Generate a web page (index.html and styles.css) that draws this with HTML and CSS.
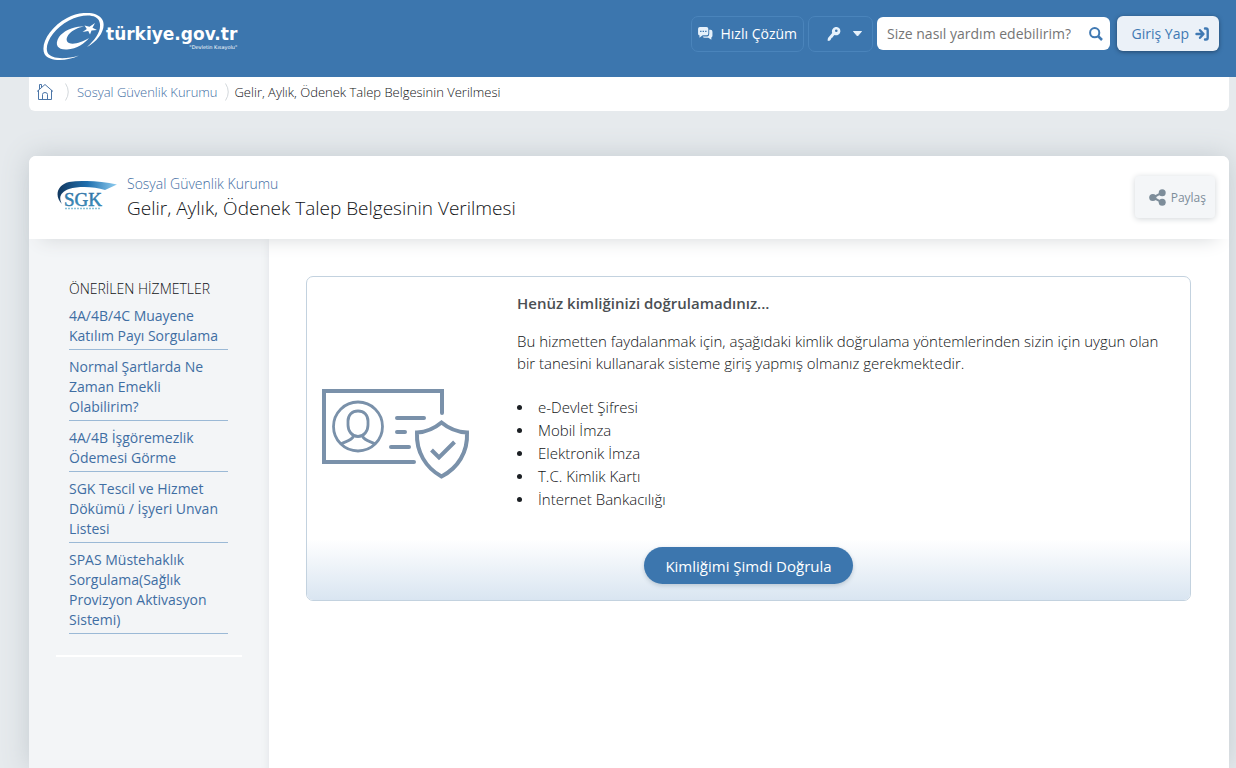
FILE: index.html
```html
<!DOCTYPE html>
<html lang="tr">
<head>
<meta charset="utf-8">
<meta name="viewport" content="width=device-width, initial-scale=1">
<title>Gelir, Aylık, Ödenek Talep Belgesinin Verilmesi</title>
<link rel="stylesheet" href="styles.css">
</head>
<body>
<header class="topbar">
  <a class="brand" href="#">
    <svg class="brand-mark" viewBox="0 0 62 48" width="62" height="48" aria-hidden="true">
      <path fill="#fff" fill-rule="evenodd" d="M36 42.500C24 48.500 6 49 1.500 41C-3 31 7 14 24 5C38 -2.500 56 -2 60 8C63 17 55 28 44 34C53 26 59 17 56.500 9C54 .5 39 1 26 7.500C11 15 1 31 4.500 39.500C8 46.500 23 46.500 36 42.500Z"/>
      <path fill="#fff" d="M41 13.500C31 12.500 20 18 16 24C11 32 15 37 24 36.500C34 36 42 30 46 25C39 29 31 32 26 30C19 26 29 15 41 13.500Z"/>
      <path fill="#fff" d="M52 10L49.500 14.800L54 17L48.500 17.500L47 21.500L45.200 18L39.500 19L43.800 16L41.500 12.500L46.500 13.800Z"/>
    </svg>
    <span class="brand-text"><span class="brand-name">türkiye.gov.tr</span><span class="brand-tag">"Devletin Kısayolu"</span></span>
  </a>
  <div class="tools">
    <button class="tool" type="button">
      <svg viewBox="0 0 16 14" width="15" height="13" aria-hidden="true"><path fill="#e6f1fb" fill-rule="evenodd" d="M2 0H9Q11 0 11 2V7Q11 9 9 9H5L1.500 11.500V9Q0 9 0 7V2Q0 0 2 0ZM2.200 4V5.500H3.700V4ZM4.900 4V5.500H6.400V4ZM7.600 4V5.500H9.100V4Z"/><path fill="#e6f1fb" d="M12 3H13.500Q15.500 3 15.500 5V9.500Q15.500 11 14.300 11.200V13.700L11 11.500H7Q5.500 11.500 5 10.200H10Q12 10 12 7.500Z"/></svg>
      Hızlı Çözüm
    </button>
    <button class="tool tool-key" type="button" aria-label="Erişim seçenekleri">
      <svg viewBox="0 0 14 14" width="14" height="14" aria-hidden="true"><path fill="#e6f1fb" fill-rule="evenodd" d="M8.500 0A4.200 4.200 0 1 1 7.500 8L6.500 9L5.500 10.500L4.500 11L3.500 13L2 14L.5 13.500L1 11L5.200 6A4.500 4.500 0 0 1 8.500 0ZM9.300 2.500A1.300 1.300 0 1 0 9.300 5.100A1.300 1.300 0 0 0 9.300 2.500Z"/></svg>
      <svg viewBox="0 0 9 6" width="9" height="6" aria-hidden="true"><path fill="#e6f1fb" d="M.5 .5H8.500L4.500 5Z" stroke="#e6f1fb" stroke-linejoin="round"/></svg>
    </button>
    <form class="search">
      <input class="search-input" type="search" aria-label="Arama" placeholder="Size nasıl yardım edebilirim?">
      <button class="search-button" type="button" aria-label="Ara"><svg viewBox="0 0 14 14" width="14" height="14" fill="none" stroke="#4079b3" stroke-width="2" aria-hidden="true"><circle cx="5.700" cy="5.700" r="4.600"/><path d="M9 9L13 13" stroke-width="2.500"/></svg></button>
    </form>
    <button class="login" type="button">Giriş Yap
      <svg viewBox="0 0 14 14" width="14" height="14" fill="none" stroke="#4079b3" stroke-width="2.400" stroke-linecap="round" stroke-linejoin="round" aria-hidden="true"><path d="M1.500 7H8M5 3.200L8.500 7L5 10.800M10 1.500H11Q12.700 1.500 12.700 3.500V10.500Q12.700 12.500 11 12.500H10"/></svg>
    </button>
  </div>
</header>
<div class="page">
  <nav class="crumbs" aria-label="Sayfa yolu">
    <a class="home" href="#" aria-label="Ana sayfa"><svg viewBox="0 0 18 18" width="18" height="18" fill="none" stroke="#4c76a8" aria-hidden="true"><path d="M2.500 7V16.500H15.500V7M1 8.500L9 1.500L17 8.500M3.500 6V1.500H5.500V4.500M6.500 16.500V11.500Q6.500 9.500 9 9.500Q11.500 9.500 11.500 11.500V16.500"/></svg></a>
    <svg class="sep" viewBox="0 0 5 18" width="5" height="18" fill="none" stroke="#d3d8dc" aria-hidden="true"><path d="M.5 .5Q6 9 .5 17.500"/></svg>
    <a href="#">Sosyal Güvenlik Kurumu</a>
    <svg class="sep sep-last" viewBox="0 0 5 18" width="5" height="18" fill="none" stroke="#d3d8dc" aria-hidden="true"><path d="M.5 .5Q6 9 .5 17.500"/></svg>
    <span>Gelir, Aylık, Ödenek Talep Belgesinin Verilmesi</span>
  </nav>
  <div class="card">
    <div class="card-head">
      <svg class="sgk" viewBox="0 0 60 30" width="60" height="30" aria-hidden="true">
        <defs>
          <linearGradient id="swoosh"><stop offset="0" stop-color="#12385f"/><stop offset=".5" stop-color="#1f6fae"/><stop offset="1" stop-color="#8fcdf0"/></linearGradient>
          <linearGradient id="letters" x2="0" y2="1"><stop offset="0" stop-color="#2a659c"/><stop offset="1" stop-color="#3ba3c8"/></linearGradient>
        </defs>
        <path fill="url(#swoosh)" d="M5 23C-3 15 0 4 12 1C26 -1 43 0 60 3.500L48 9C37 5.500 22 5 12 8C4 11 1 16 5 23Z"/>
        <text class="sgk-name" x="7" y="25" fill="url(#letters)" stroke="#3579aa" stroke-width=".5">SGK</text>
        <path stroke="#8cc3d8" stroke-width="1.500" stroke-dasharray="2 1" d="M8 27.500H44"/>
      </svg>
      <div class="titles">
        <a class="agency" href="#">Sosyal Güvenlik Kurumu</a>
        <h1>Gelir, Aylık, Ödenek Talep Belgesinin Verilmesi</h1>
      </div>
      <button class="share" type="button">
        <svg viewBox="0 0 17 17" width="17" height="17" aria-hidden="true"><g fill="#7d8d9a"><circle cx="3.800" cy="8.500" r="3.600"/><circle cx="13.200" cy="3.700" r="3.500"/><circle cx="13.200" cy="13.300" r="3.500"/></g><path d="M13 3.700L4 8.500L13 13.300" fill="none" stroke="#7d8d9a" stroke-width="2"/></svg>
        Paylaş
      </button>
    </div>
    <div class="card-body">
      <aside class="side">
        <div class="side-inner">
          <h2>ÖNERİLEN HİZMETLER</h2>
          <ul class="links">
            <li><a href="#">4A/4B/4C Muayene Katılım Payı Sorgulama</a></li>
            <li><a href="#">Normal Şartlarda Ne Zaman Emekli Olabilirim?</a></li>
            <li><a href="#">4A/4B İşgöremezlik Ödemesi Görme</a></li>
            <li><a href="#">SGK Tescil ve Hizmet Dökümü / İşyeri Unvan Listesi</a></li>
            <li><a href="#">SPAS Müstehaklık Sorgulama(Sağlık Provizyon Aktivasyon Sistemi)</a></li>
          </ul>
        </div>
      </aside>
      <main class="content">
        <section class="notice">
          <div class="notice-main">
            <svg viewBox="0 0 150 92" width="150" height="92" fill="none" stroke="#7a91aa" stroke-width="4" stroke-linecap="round" stroke-linejoin="round" aria-hidden="true">
              <path d="M93 75H3V4H121V26" stroke-linejoin="miter"/>
              <circle cx="37" cy="39.500" r="24.500" stroke-width="2.800"/>
              <path stroke-width="2.800" d="M37 24C31 24 27 28 27 34V38C27 44 31 49.500 37 49.500C43 49.500 47 44 47 38V34C47 28 43 24 37 24ZM20.500 56.500C26 54 31 53.500 32.500 49M53.500 56.500C48 54 43 53.500 41.500 49"/>
              <path d="M76 31H103M76 45H84M70 60H88"/>
              <path stroke-linejoin="miter" d="M120.500 35.500C114 41 105 45 96 45.500C95 65 105 81 120.500 89.500C137 81 147 65 146 45.500C136 45 127 41 120.500 35.500Z"/>
              <path stroke-linecap="butt" stroke-linejoin="miter" d="M110.500 63L118 70.500L133.500 55"/>
            </svg>
            <div class="notice-text">
              <h3>Henüz kimliğinizi doğrulamadınız...</h3>
              <p>Bu hizmetten faydalanmak için, aşağıdaki kimlik doğrulama yöntemlerinden sizin için uygun olan bir tanesini kullanarak sisteme giriş yapmış olmanız gerekmektedir.</p>
              <ul>
                <li>e-Devlet Şifresi</li>
                <li>Mobil İmza</li>
                <li>Elektronik İmza</li>
                <li>T.C. Kimlik Kartı</li>
                <li>İnternet Bankacılığı</li>
              </ul>
            </div>
          </div>
          <div class="notice-foot"><button class="verify" type="button">Kimliğimi Şimdi Doğrula</button></div>
        </section>
      </main>
    </div>
  </div>
</div>
</body>
</html>
```
FILE: styles.css
```css
* { box-sizing: border-box; }
body {
  margin: 0;
  min-height: 100vh;
  display: flex;
  flex-direction: column;
  background: #e6eaed;
  color: #111316;
  font-family: "Open Sans", "Noto Sans", sans-serif;
  font-size: 15px;
}
h1, h2, h3, p, ul { margin: 0; padding: 0; }
a { color: #3f6ea3; text-decoration: none; }
button { font: inherit; border: 0; cursor: pointer; }
svg { flex: none; }

.topbar {
  height: 77px;
  padding: 0 17px 0 43px;
  display: flex;
  justify-content: space-between;
  background: #3c76ae;
}
.brand { display: flex; gap: 1px; padding-top: 13px; color: #fff; }
.brand-text { display: flex; flex-direction: column; padding-top: 11px; }
.brand-name { font: bold 17px/20px "DejaVu Sans", sans-serif; }
.brand-tag { align-self: flex-end; font: 5px/6px "DejaVu Sans", sans-serif; }

.tools { display: flex; align-items: center; height: 67px; font-size: 14px; }
.tool {
  display: flex;
  align-items: center;
  gap: 8px;
  height: 36px;
  padding: 0 6px;
  margin-right: 4px;
  border: 1px solid #4a84bb;
  border-radius: 7px;
  background: transparent;
  color: #fff;
}
.tool-key { width: 65px; gap: 12px; padding: 0 10px 0 18px; }
.search {
  display: flex;
  width: 233px;
  height: 33px;
  margin-right: 7px;
  border-radius: 6px;
  background: #fff;
}
.search-input {
  flex: 1;
  min-width: 0;
  padding: 0 0 0 10px;
  border: 0;
  background: transparent;
  font: inherit;
}
.search-input::placeholder { color: #757575; }
.search-button { display: flex; align-items: center; padding: 0 7px 0 4px; background: transparent; }
.login {
  display: flex;
  align-items: center;
  justify-content: flex-end;
  gap: 6px;
  width: 102px;
  height: 35px;
  padding: 0 10px;
  border-radius: 6px;
  background: #ebf1f8;
  color: #4079b3;
  box-shadow: 0 1px 4px #24486c;
}

.page { flex: 1; display: flex; flex-direction: column; margin: 0 7px 0 29px; }
.crumbs {
  display: flex;
  align-items: center;
  height: 34px;
  padding: 0 7px 4px;
  border-radius: 0 0 6px 6px;
  background: #fff;
  font-size: 13px;
  font-weight: 300;
}
.home { display: flex; }
.sep { margin: 0 7px 0 11px; }
.sep-last { margin: 0 4px 0 8px; }

.card {
  flex: 1;
  display: flex;
  flex-direction: column;
  margin-top: 45px;
  border-radius: 7px 7px 0 0;
  background: #fff;
  box-shadow: 0 0 28px #c3cacf;
}
.card-head {
  position: relative;
  display: flex;
  align-items: flex-start;
  height: 83px;
  padding: 19px 14px 0 28px;
  border-radius: 7px 7px 0 0;
  background: #fff;
  box-shadow: 0 12px 18px -12px #d4d7d9;
}
.sgk { margin-top: 6px; }
.sgk-name { font: 19px "Liberation Serif", serif; }
.titles { flex: 1; padding-left: 10px; }
.agency { display: block; font-size: 14px; line-height: 18px; font-weight: 300; }
h1 { font-size: 19px; line-height: 30px; font-weight: 300; }
.share {
  display: flex;
  align-items: center;
  gap: 5px;
  height: 42px;
  margin-top: 1px;
  padding: 0 9px 0 14px;
  border-radius: 4px;
  background: #f4f6f8;
  color: #7d8d9a;
  font-size: 12px;
  box-shadow: 0 1px 6px #d2d6d9;
}

.card-body { flex: 1; display: flex; }
.side {
  width: 240px;
  padding: 39px 27px 0;
  background: #f3f5f7;
  box-shadow: inset -8px 0 8px -8px #e0e3e5;
}
.side-inner { padding: 0 14px 21px 13px; border-bottom: 2px solid #fff; }
h2 { font-size: 14px; line-height: 22px; font-weight: 300; }
.links { list-style: none; font-size: 14px; line-height: 20px; font-weight: 500; }
.links li { padding: 6px 0 3px; border-bottom: 1px solid #9bb9d6; }
.links li + li { padding-top: 7px; }

.content { flex: 1; min-width: 0; padding: 37px 38px 38px 37px; }
.notice { border: 1px solid #c3d2df; border-radius: 7px; overflow: hidden; }
.notice-main { display: flex; align-items: center; gap: 46px; padding: 15px 22px 28px 14px; }
.notice-main > svg { margin-top: 62px; }
.notice-text { flex: 1; font-size: 15px; line-height: 22px; font-weight: 340; }
h3 { font-size: 15px; line-height: 22px; font-weight: 600; color: #4b4f53; }
.notice-text p { margin-top: 16px; }
.notice-text ul { margin-top: 22px; list-style: none; }
.notice-text li { display: flex; align-items: center; gap: 16px; line-height: 23px; }
.notice-text li::before {
  content: "";
  width: 5px;
  height: 5px;
  border-radius: 50%;
  background: #1c2024;
}
.notice-foot {
  display: flex;
  justify-content: center;
  padding: 8px 0 16px;
  background: linear-gradient(#fff, #d9e5f1);
}
.verify {
  height: 37px;
  padding: 0 21px;
  border-radius: 19px;
  background: #3c76ae;
  color: #fff;
  box-shadow: 0 2px 4px #bcc9d5;
}
```
